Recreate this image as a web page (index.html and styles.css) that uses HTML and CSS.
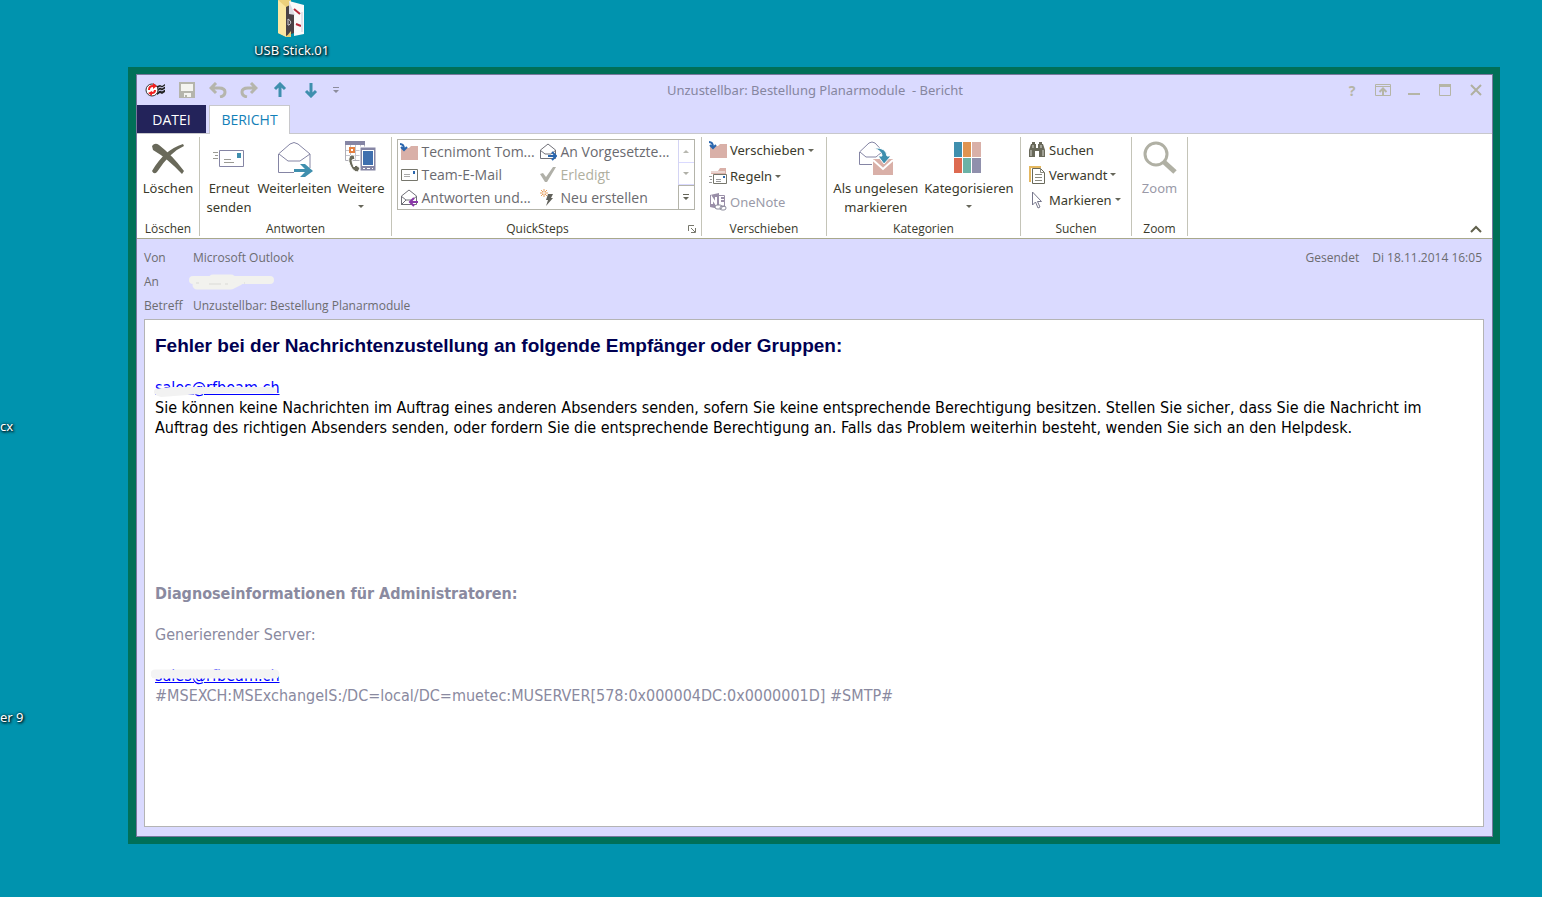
FILE: index.html
```html
<!DOCTYPE html>
<html lang="de">

<head>
    <meta charset="UTF-8">
    <meta name="viewport" content="width=device-width, initial-scale=1.0">
    <title>Unzustellbar: Bestellung Planarmodule - Bericht</title>
    <link rel="stylesheet" href="styles.css">
</head>

<body>

    <!-- Desktop icons -->
    <div class="desktop-icon usb">
        <svg width="30" height="38" viewBox="0 0 30 38">
            <path d="M1 0H14V31L10 37L1 33Z" fill="#ecd07c"/>
            <path d="M1 0L9 7V37L1 33Z" fill="#fbe7a2"/>
            <path d="M9 7L17 3V33L9 36Z" fill="#4a4246"/>
            <path d="M12 1L27 5V34L17 36V14L12 12Z" fill="#fafafa"/>
            <path d="M12 1L18 15L12 14Z" fill="#dcdce4"/>
            <path d="M17 9L23 14M19 24L24 26" stroke="#b52a3a" stroke-width="2"/>
            <path d="M24 12H26V32H24" fill="#e3e3ea"/>
            <path d="M11 19V25H12Q16 22 11 19" fill="none" stroke="#c9c9d0"/>
            <path d="M9 37L14 31V37Z" fill="#f0cf70"/>
        </svg>
        <span>USB Stick.01</span>
    </div>
    <div class="desktop-icon docx"><span>cx</span></div>
    <div class="desktop-icon reader"><span>er 9</span></div>

    <main class="window">
        <header class="titlebar">
            <div class="quick-access">
                <button class="tool" aria-label="Outlook">
                    <svg width="20" height="16" viewBox="0 0 20 16">
                        <path d="M12 4L15 3L17 4L20 2V10L17 12L15 11L12 13Z" fill="#222"/>
                        <path d="M12 7L15 5L17 6L20 4M12 10L15 8L17 9L20 7" fill="none" stroke="#dadaff"/>
                        <circle cx="7" cy="8" r="6" fill="#fff" stroke="#333"/>
                        <path d="M3 8Q3 3 8 3V1L12 4L8 7V5Q5 5 5 8ZM11 8Q11 12 7 12V14L3 11L7 9V10Q9 10 9 8Z" fill="#f02020"/>
                    </svg>
                </button>
                <button class="tool" aria-label="Speichern">
                    <svg width="16" height="16" viewBox="0 0 16 16">
                        <path d="M1 1H15V15H1Z" fill="#f4f4f0" stroke="#b5b5ac" stroke-width="2"/>
                        <path d="M2 9H14V15H2Z" fill="#b5b5ac"/>
                        <path d="M5 11H12V15H8V13H6V15H5Z" fill="#f4f4f0"/>
                    </svg>
                </button>
                <button class="tool" aria-label="Rückgängig">
                    <svg width="18" height="16" viewBox="0 0 18 16" fill="none" stroke="#b5b5ac" stroke-width="3">
                        <path d="M7 1L2 6L7 11M3 6H10Q16 6 16 10Q16 14 11 15"/>
                    </svg>
                </button>
                <button class="tool" aria-label="Wiederholen">
                    <svg width="18" height="16" viewBox="0 0 18 16" fill="none" stroke="#b5b5ac" stroke-width="3">
                        <path d="M11 1L16 6L11 11M15 6H8Q2 6 2 10Q2 14 7 15"/>
                    </svg>
                </button>
                <button class="tool" aria-label="Vorheriges Element">
                    <svg width="14" height="16" viewBox="0 0 14 16" fill="none" stroke="#3f8fae" stroke-width="3">
                        <path d="M7 15V2M2 7L7 2L12 7"/>
                    </svg>
                </button>
                <button class="tool" aria-label="Nächstes Element">
                    <svg width="14" height="16" viewBox="0 0 14 16" fill="none" stroke="#3f8fae" stroke-width="3">
                        <path d="M7 1V14M2 9L7 14L12 9"/>
                    </svg>
                </button>
                <button class="tool narrow" aria-label="Symbolleiste anpassen">
                    <svg width="6" height="8" viewBox="0 0 6 8" fill="#8c8c9c">
                        <path d="M0 1H6V2H0ZM0 4H6L3 7Z"/>
                    </svg>
                </button>
            </div>
            <h1 class="window-title">Unzustellbar: Bestellung Planarmodule &nbsp;- Bericht</h1>
            <div class="window-controls">
                <button class="tool help" aria-label="Hilfe">?</button>
                <button class="tool" aria-label="Menüband-Anzeigeoptionen">
                    <svg width="16" height="12" viewBox="0 0 16 12" fill="none" stroke="#b5b5a6">
                        <path d="M.5 .5H15.5V11.5H.5ZM.5 2.5H15.5"/>
                        <path d="M8 11V5M4.500 8L8 4.500L11.500 8" stroke-width="2"/>
                    </svg>
                </button>
                <button class="tool" aria-label="Minimieren">
                    <svg width="12" height="12" viewBox="0 0 12 12"><path d="M0 9H12V11H0Z" fill="#b5b5a6"/></svg>
                </button>
                <button class="tool" aria-label="Maximieren">
                    <svg width="12" height="12" viewBox="0 0 12 12" fill="none" stroke="#b5b5a6">
                        <path d="M.5 .5H11.500V11.500H.5Z" />
                        <path d="M0 1.500H12" stroke-width="3"/>
                    </svg>
                </button>
                <button class="tool" aria-label="Schließen">
                    <svg width="12" height="12" viewBox="0 0 12 12" stroke="#b0b0a0" stroke-width="2">
                        <path d="M1 1L11 11M11 1L1 11"/>
                    </svg>
                </button>
            </div>
        </header>

        <nav class="tabs">
            <button class="tab file">DATEI</button>
            <button class="tab active">BERICHT</button>
        </nav>

        <section class="ribbon">
            <div class="group delete">
                <div class="group-body">
                    <button class="big">
                        <svg width="36" height="36" viewBox="0 0 36 36" fill="#69695a">
                            <path d="M2 6Q5 2 9 5Q22 15 34 31L32 34Q17 18 3 10Z"/>
                            <path d="M34 6Q20 12 7 32Q4 35 2 31Q14 10 33 4Z"/>
                        </svg>
                        <span>Löschen</span>
                    </button>
                </div>
                <div class="group-label">Löschen</div>
            </div>

            <div class="group reply">
                <div class="group-body">
                    <button class="big">
                        <svg width="36" height="36" viewBox="0 0 36 36">
                            <path d="M8.500 10.500H32.500V26.500H8.500Z" fill="#fff" stroke="#8585a4"/>
                            <path d="M26 13H30V18H26Z" fill="#3f8fae"/>
                            <path d="M13 19.500H20M13 22.500H23M2 12.500H7M4 15.500H7M2 18.500H7" stroke="#9a9a94"/>
                        </svg>
                        <span>Erneut<br>senden</span>
                    </button>
                    <button class="big">
                        <svg width="36" height="36" viewBox="0 0 36 36">
                            <path d="M2.500 14L14 4Q18 1 22 4L34 14V32.500H2.500Z" fill="#fff" stroke="#8585a4"/>
                            <path d="M3 14L12 21H24L34 14" fill="none" stroke="#8585a4"/>
                            <path d="M18 28H36V36H18Z" fill="#fff"/>
                            <path d="M18 29H29L24 24H29L37 31L29 37H24L29 32H18Z" fill="#3f8fae"/>
                        </svg>
                        <span>Weiterleiten</span>
                    </button>
                    <button class="big">
                        <svg width="36" height="36" viewBox="0 0 36 36">
                            <path d="M2.500 1.500H21.500V20.500H2.500Z" fill="#fff" stroke="#b0b0b8"/>
                            <path d="M2 1H22V5H2Z" fill="#8585a4"/>
                            <path d="M3 10.500H21M3 15.500H21M7.500 5V20M12.500 5V20M17.500 5V20" stroke="#c4c4cc"/>
                            <path d="M7 8H11V12H7Z" fill="#fff" stroke="#e58040" stroke-width="2"/>
                            <path d="M17 7H33V31H17Z" fill="#8585a4" stroke="#fff"/>
                            <path d="M19 10H31V26H19Z" fill="#fff"/>
                            <path d="M20 11H30V25H20Z" fill="#3f6fae"/>
                            <path d="M20 28H22V29H20ZM24 28H27V29H24ZM29 28H30V29H29Z" fill="#fff"/>
                            <path d="M8 15Q4 18 7 25Q10 32 15 32L17 28L13 25L11 27Q9 23 9 20L12 19L11 15Z" fill="#69695a" stroke="#fff"/>
                        </svg>
                        <span>Weitere</span>
                        <i class="arrow"></i>
                    </button>
                </div>
                <div class="group-label">Antworten</div>
            </div>

            <div class="group quicksteps">
                <div class="group-body">
                    <div class="gallery">
                        <div class="gallery-items">
                            <button class="step">
                                <svg width="18" height="18" viewBox="0 0 18 18">
                                    <path d="M1 5H9L11 3H18V17H1Z" fill="#d9b0a8"/>
                                    <path d="M0 1Q4 1 4 6M1 4L4 7L7 4" fill="none" stroke="#2a66ae" stroke-width="2"/>
                                </svg>
                                <span>Tecnimont Tom...</span>
                            </button>
                            <button class="step">
                                <svg width="18" height="18" viewBox="0 0 18 18" fill="#fff" stroke="#707078">
                                    <path d="M1.500 7L9 1L16.500 7V15.500H1.500Z"/><path d="M1 7L6 11H12L17 7" fill="none"/>
                                    <path d="M9 13H17M13 9L17 13L13 17" fill="none" stroke="#2a66ae" stroke-width="2"/>
                                </svg>
                                <span>An Vorgesetzte...</span>
                            </button>
                            <button class="step">
                                <svg width="18" height="18" viewBox="0 0 18 18">
                                    <path d="M1.500 3.500H17.500V14.500H1.500Z" fill="#fff" stroke="#76766c"/>
                                    <path d="M4 8.500H10M4 10.500H10" stroke="#aaa"/><path d="M13 5H15V8H13Z" fill="#2a66ae"/>
                                </svg>
                                <span>Team-E-Mail</span>
                            </button>
                            <button class="step" disabled>
                                <svg width="18" height="18" viewBox="0 0 18 18">
                                    <path d="M1 8L4 7L7 11L14 1H17L8 16H6Z" fill="#b0b0a8"/>
                                </svg>
                                <span>Erledigt</span>
                            </button>
                            <button class="step">
                                <svg width="18" height="18" viewBox="0 0 18 18" fill="#fff" stroke="#707078">
                                    <path d="M1.500 7L9 1L16.500 7V15.500H1.500Z"/><path d="M1 7L6 11H12L17 7M1 16L6 11" fill="none"/>
                                    <path d="M10 13H18M14 9L10 13L14 17" fill="none" stroke="#8a38a8" stroke-width="2"/>
                                </svg>
                                <span>Antworten und...</span>
                            </button>
                            <button class="step">
                                <svg width="18" height="18" viewBox="0 0 18 18">
                                    <path d="M5 0V8M1 4H9M2 1L8 7M8 1L2 7" stroke="#e8a060"/>
                                    <circle cx="5" cy="4" r="1" fill="#fff"/>
                                    <path d="M9 5H14L12 9H14L7 17L9 11H7Z" fill="#60605a"/>
                                </svg>
                                <span>Neu erstellen</span>
                            </button>
                        </div>
                        <div class="gallery-scroll">
                            <button aria-label="Nach oben"><i class="arrow up"></i></button>
                            <button aria-label="Nach unten"><i class="arrow faint"></i></button>
                            <button class="more" aria-label="Weitere">
                                <svg width="8" height="8" viewBox="0 0 8 8" fill="#66665a">
                                    <path d="M1 0H7V1H1ZM1 3H7L4 6Z"/>
                                </svg>
                            </button>
                        </div>
                    </div>
                </div>
                <div class="group-label">
                    <span>QuickSteps</span>
                    <button class="launcher" aria-label="QuickSteps verwalten">
                        <svg width="8" height="8" viewBox="0 0 8 8" fill="none" stroke="#77776c">
                            <path d="M.5 6V.5H6M3 3L7 7M7.500 3V7.500H3"/>
                        </svg>
                    </button>
                </div>
            </div>

            <div class="group move">
                <div class="group-body list">
                    <button class="small">
                        <svg width="18" height="18" viewBox="0 0 18 18">
                            <path d="M1 5H9L11 3H18V17H1Z" fill="#d9b0a8"/>
                            <path d="M0 1Q4 1 4 6M1 4L4 7L7 4" fill="none" stroke="#2a66ae" stroke-width="2"/>
                        </svg>
                        <span>Verschieben</span><i class="arrow"></i>
                    </button>
                    <button class="small">
                        <svg width="18" height="18" viewBox="0 0 18 18">
                            <path d="M2 4H9L11 1H17V7H2Z" fill="#d9b0a8"/><path d="M2 5H16" stroke="#fff"/>
                            <path d="M4.500 7.500H17.500V16.500H4.500Z" fill="#fff" stroke="#76766c"/>
                            <path d="M0 9.500H3M1 12.500H3M0 15.500H3M7 12.500H12M7 14.500H12" stroke="#999"/>
                            <path d="M14 9H16V11H14Z" fill="#2a66ae"/>
                        </svg>
                        <span>Regeln</span><i class="arrow"></i>
                    </button>
                    <button class="small" disabled>
                        <svg width="18" height="18" viewBox="0 0 18 18">
                            <path d="M8.500 2.500H15.500V13.500H8.500Z" fill="#fff" stroke="#9a8fa8"/>
                            <path d="M12 5H15M12 8H15" stroke="#9a8fa8" stroke-width="2"/>
                            <path d="M1 2L10 0V16L1 14Z" fill="#9a8fa8"/>
                            <path d="M3 11V5L7 11V4" fill="none" stroke="#fff" stroke-width="2"/>
                            <rect x="6" y="12" width="7" height="4" rx="2" fill="#fff" stroke="#8c8c9c"/>
                            <rect x="11" y="13" width="6" height="4" rx="2" fill="none" stroke="#8c8c9c"/>
                        </svg>
                        <span>OneNote</span>
                    </button>
                </div>
                <div class="group-label">Verschieben</div>
            </div>

            <div class="group categories">
                <div class="group-body">
                    <button class="big">
                        <svg width="36" height="36" viewBox="0 0 36 36">
                            <path d="M1.500 12L11 3Q14 1 17 3L24.500 11V24.500H1.500Z" fill="#fff" stroke="#8585a4"/>
                            <path d="M2 12L8 17H18L24 12" fill="none" stroke="#8585a4"/>
                            <path d="M14 19H36V36H14Z" fill="#fff"/>
                            <path d="M15 19H35V35H15Z" fill="#d9b0a8"/>
                            <path d="M15 20L25 29L35 20" fill="none" stroke="#fff" stroke-width="2"/>
                            <path d="M16 8Q28 7 29 16H33L26 24L20 16H24Q24 11 16 8Z" fill="#3f8fae" stroke="#fff"/>
                        </svg>
                        <span>Als ungelesen<br>markieren</span>
                    </button>
                    <button class="big">
                        <svg width="36" height="36" viewBox="0 0 36 36">
                            <path d="M3 2H11V17H3Z" fill="#3f8fae"/><path d="M12 2H20V17H12Z" fill="#df9450"/>
                            <path d="M21 2H30V17H21Z" fill="#d9b0a8"/><path d="M3 18H11V33H3Z" fill="#dd6a50"/>
                            <path d="M12 18H20V33H12Z" fill="#6cb2a6"/><path d="M21 18H30V33H21Z" fill="#9090ac"/>
                        </svg>
                        <span>Kategorisieren</span>
                        <i class="arrow"></i>
                    </button>
                </div>
                <div class="group-label">Kategorien</div>
            </div>

            <div class="group search">
                <div class="group-body list">
                    <button class="small">
                        <svg width="18" height="18" viewBox="0 0 18 18" fill="#69695a">
                            <path d="M4 1H7V3H8V7H10V3H11V1H14V3H15L17 9V16H11V10H7V16H1V9L3 3H4Z"/>
                            <path d="M3 9V15M15 9V15M5 4V7M13 4V7" stroke="#d8d8d0"/>
                        </svg>
                        <span>Suchen</span>
                    </button>
                    <button class="small">
                        <svg width="18" height="18" viewBox="0 0 18 18" fill="#fff">
                            <path d="M2 16V1H13" fill="none" stroke="#e5b860" stroke-width="2"/>
                            <path d="M4.500 2.500H12.500L16.500 6.500V17.500H4.500Z" stroke="#69695a"/>
                            <path d="M12.500 2.500V6.500H16.500M7 8.500H14M7 11.500H14M7 14.500H14" fill="none" stroke="#8a8a80"/>
                        </svg>
                        <span>Verwandt</span><i class="arrow"></i>
                    </button>
                    <button class="small">
                        <svg width="18" height="18" viewBox="0 0 18 18">
                            <path d="M4.500 1V14L7.500 11L10 17L12 16L9.500 10.500H13.500Z" fill="#fff" stroke="#77778c"/>
                        </svg>
                        <span>Markieren</span><i class="arrow"></i>
                    </button>
                </div>
                <div class="group-label">Suchen</div>
            </div>

            <div class="group zoom">
                <div class="group-body">
                    <button class="big" disabled>
                        <svg width="36" height="36" viewBox="0 0 36 36" fill="none" stroke="#b0b0a4">
                            <circle cx="14" cy="14" r="11" stroke-width="3"/>
                            <path d="M22 22L33 32" stroke-width="5"/>
                        </svg>
                        <span>Zoom</span>
                    </button>
                </div>
                <div class="group-label">Zoom</div>
            </div>

            <button class="collapse" aria-label="Menüband reduzieren">
                <svg width="12" height="8" viewBox="0 0 12 8" fill="none" stroke="#60604c" stroke-width="2">
                    <path d="M1 7L6 2L11 7"/>
                </svg>
            </button>
        </section>

        <section class="message">
            <div class="fields">
                <span>Von</span>
                <span>Microsoft Outlook</span>
                <span class="sent"><span>Gesendet</span><span>Di 18.11.2014 16:05</span></span>
                <span>An</span>
                <svg class="recipient" width="90" height="18" viewBox="0 0 90 18">
                    <path d="M6 8H83" stroke="#f2f2ee" stroke-width="8" stroke-linecap="round"/>
                    <path d="M10 13H44L52 9" fill="none" stroke="#f2f2ee" stroke-width="9" stroke-linecap="round" stroke-linejoin="round"/>
                    <path d="M26 7H44" stroke="#f2f2ee" stroke-width="9" stroke-linecap="round"/>
                    <path d="M9 11H12M22 12H34M38 12H41M57 11H58" stroke="#dadad6"/>
                </svg>
                <span></span>
                <span>Betreff</span>
                <span>Unzustellbar: Bestellung Planarmodule</span>
                <span></span>
            </div>

            <article class="mail">
                <h2>Fehler bei der Nachrichtenzustellung an folgende Empfänger oder Gruppen:</h2>
                <p class="address">
                    <a href="#">sales@rfbeam.ch</a>
                    <svg class="smudge lower" width="130" height="14" viewBox="0 0 130 14">
                        <path d="M4 4L20 2H120Q127 3 125 7Q122 10 108 8H80L50 9L10 12Q0 10 4 4Z" fill="#f2f2f2"/>
                    </svg>
                </p>
                <p>Sie können keine Nachrichten im Auftrag eines anderen Absenders senden, sofern Sie keine entsprechende Berechtigung besitzen. Stellen Sie sicher, dass Sie die Nachricht im Auftrag des richtigen Absenders senden, oder fordern Sie die entsprechende Berechtigung an. Falls das Problem weiterhin besteht, wenden Sie sich an den Helpdesk.</p>

                <div class="diagnostics">
                    <h3>Diagnoseinformationen für Administratoren:</h3>
                    <p class="server">Generierender Server:</p>
                    <p class="address">
                        <a href="#">sales@rfbeam.ch</a>
                        <svg class="smudge upper" width="130" height="14" viewBox="0 0 130 14">
                            <path d="M4 7H124" stroke="#f4f4f4" stroke-width="9" stroke-linecap="round"/>
                        </svg>
                    </p>
                    <p>#MSEXCH:MSExchangeIS:/DC=local/DC=muetec:MUSERVER[578:0x000004DC:0x0000001D] #SMTP#</p>
                </div>
            </article>
        </section>
    </main>

</body>

</html>
```
FILE: styles.css
```css
* {
    box-sizing: border-box;
}

body {
    display: flex;
    min-height: 100vh;
    margin: 0;
    padding: 67px 42px 53px 128px;
    background-color: #0093ae;
    font-family: "Noto Sans", sans-serif;
    font-size: 13px;
    color: #3a3a2c;
}

button {
    padding: 0;
    border: none;
    background: none;
    font: inherit;
    color: inherit;
    white-space: nowrap;
}

svg {
    display: block;
    flex: none;
}

h1, h2, h3, p {
    margin: 0;
}

/* Desktop icons */
.desktop-icon {
    position: absolute;
    display: flex;
    flex-direction: column;
    align-items: center;
    line-height: 20px;
    color: #fff;
    text-shadow: 1px 1px 2px #002830, 1px 1px 3px #002830, 0 0 3px #003038;
    white-space: nowrap;
}

.usb {
    top: 0;
    left: 254px;
    gap: 2px;
}

.docx {
    top: 416px;
    left: 0;
}

.reader {
    top: 707px;
    left: 0;
}

/* Window */
.window {
    display: flex;
    flex-direction: column;
    flex: 1;
    min-width: 0;
    border: 7px solid #007058;
    border-left-width: 8px;
    background-color: #dadaff;
    box-shadow: inset 0 0 0 1px #77779c;
    padding: 1px;
}

.titlebar {
    display: grid;
    grid-template-columns: 1fr auto 1fr;
    align-items: center;
    height: 30px;
    padding: 0 7px 0 8px;
}

.quick-access {
    display: flex;
    align-items: center;
    gap: 13px;
}

.window-title {
    font-size: 13px;
    font-weight: normal;
    color: #8686a0;
}

.tool {
    display: flex;
    align-items: center;
    justify-content: center;
    min-width: 18px;
}

.tool.narrow {
    min-width: 6px;
}

.window-controls {
    display: flex;
    align-items: center;
    justify-content: flex-end;
    gap: 13px;
}

.help {
    font-size: 14px;
    font-weight: bold;
    color: #b5b5a6;
}

/* Tabs */
.tabs {
    display: flex;
    gap: 3px;
    height: 29px;
    border-bottom: 1px solid #c8c8cc;
    font-family: "Open Sans", sans-serif;
    font-size: 14px;
}

.tab {
    width: 69px;
}

.tab.file {
    background-color: #23235a;
    color: #fff;
}

.tab.active {
    width: 81px;
    height: 29px;
    padding-bottom: 2px;
    border: 1px solid #c8c8cc;
    border-bottom: none;
    background-color: #fff;
    color: #1380b8;
}

/* Ribbon */
.ribbon {
    display: flex;
    height: 105px;
    padding: 3px 0 2px;
    border-bottom: 1px solid #a8a88c;
    background-color: #fff;
}

.group {
    display: flex;
    flex-direction: column;
    border-right: 1px solid #c4c4b8;
}

.group-body {
    display: flex;
    justify-content: center;
    flex: 1;
}

.group-label {
    display: flex;
    justify-content: center;
    position: relative;
    font-family: "Open Sans", sans-serif;
    font-size: 12px;
    line-height: 14px;
}

.delete { width: 63px; }
.reply { width: 192px; }
.quicksteps { width: 310px; }
.move { width: 125px; }
.categories { width: 194px; }
.search { width: 111px; }
.zoom { width: 56px; }

.quicksteps .group-label {
    padding-right: 18px;
}

.big {
    display: flex;
    flex-direction: column;
    align-items: center;
    justify-content: flex-start;
    padding: 3px 3px 0;
    line-height: 19px;
}

.big svg {
    margin-bottom: 3px;
    overflow: visible;
}

.big .arrow {
    margin: 7px 0 0;
}

.arrow {
    display: inline-block;
    border: 3px solid transparent;
    border-top-color: #66665a;
    border-bottom: none;
}

.arrow.up {
    border-top: none;
    border-bottom: 3px solid #b8b8b0;
}

.arrow.faint {
    border-top-color: #b0b0a8;
}

button:disabled {
    color: #9a9aa8;
}

.gallery {
    display: flex;
    width: 298px;
    height: 71px;
    margin: 2px 2px 0 0;
    border: 1px solid #b4b4aa;
}

.gallery-items {
    display: grid;
    grid-template-columns: 139px 1fr;
    grid-template-rows: repeat(3, 23px);
    flex: 1;
    padding-left: 2px;
}

.step {
    display: flex;
    align-items: center;
    gap: 4px;
    font-family: "Open Sans", sans-serif;
    font-size: 14px;
    line-height: 18px;
    color: #6a6a70;
}

.step:disabled {
    color: #b0b0a0;
}

.gallery-scroll {
    display: grid;
    grid-template-rows: 23px 22px 1fr;
    width: 16px;
    border-left: 1px solid #d4d4f4;
}

.gallery-scroll button {
    display: flex;
    align-items: center;
    justify-content: center;
    border-bottom: 1px solid #dadaff;
}

.gallery-scroll .more {
    margin-left: -1px;
    border: 1px solid #b4b4aa;
    border-width: 1px 0 0 1px;
}

.launcher {
    position: absolute;
    right: 5px;
    top: 3px;
}

.list {
    flex-direction: column;
    justify-content: flex-start;
    align-items: flex-start;
    padding-left: 7px;
}

.small {
    display: flex;
    align-items: center;
    gap: 3px;
    height: 26px;
}

.search .small {
    height: 25px;
}

.collapse {
    align-self: flex-end;
    margin: 0 10px 3px auto;
}

/* Message */
.message {
    display: flex;
    flex-direction: column;
    flex: 1;
    padding: 6px 8px 9px 7px;
}

.fields {
    display: grid;
    grid-template-columns: 49px 1fr auto;
    align-items: center;
    grid-auto-rows: 24px;
    padding-right: 2px;
    font-family: "Open Sans", sans-serif;
    font-size: 12px;
    color: #6c6c70;
}

.recipient {
    margin-left: -6px;
}

.sent {
    display: flex;
    gap: 13px;
}

.mail {
    flex: 1;
    margin-top: 2px;
    padding: 14px 50px 13px 10px;
    border: 1px solid #b4b4b4;
    background-color: #fff;
    font-family: "DejaVu Sans Condensed", "DejaVu Sans", sans-serif;
    font-size: 16px;
    line-height: 20px;
    color: #000;
}

.mail h2 {
    margin-bottom: 20px;
    font-family: "Liberation Sans", Arial, sans-serif;
    font-size: 19px;
    line-height: 24px;
    color: #000052;
}

.address {
    position: relative;
}

.address a {
    color: #0000ff;
}

.smudge {
    position: absolute;
    left: -4px;
}

.smudge.lower {
    top: 7px;
}

.smudge.upper {
    top: 1px;
}

.diagnostics {
    margin-top: 146px;
    color: #8a8aa0;
}

.diagnostics h3 {
    font-size: 16px;
}

.server {
    margin: 21px 0;
}
```
